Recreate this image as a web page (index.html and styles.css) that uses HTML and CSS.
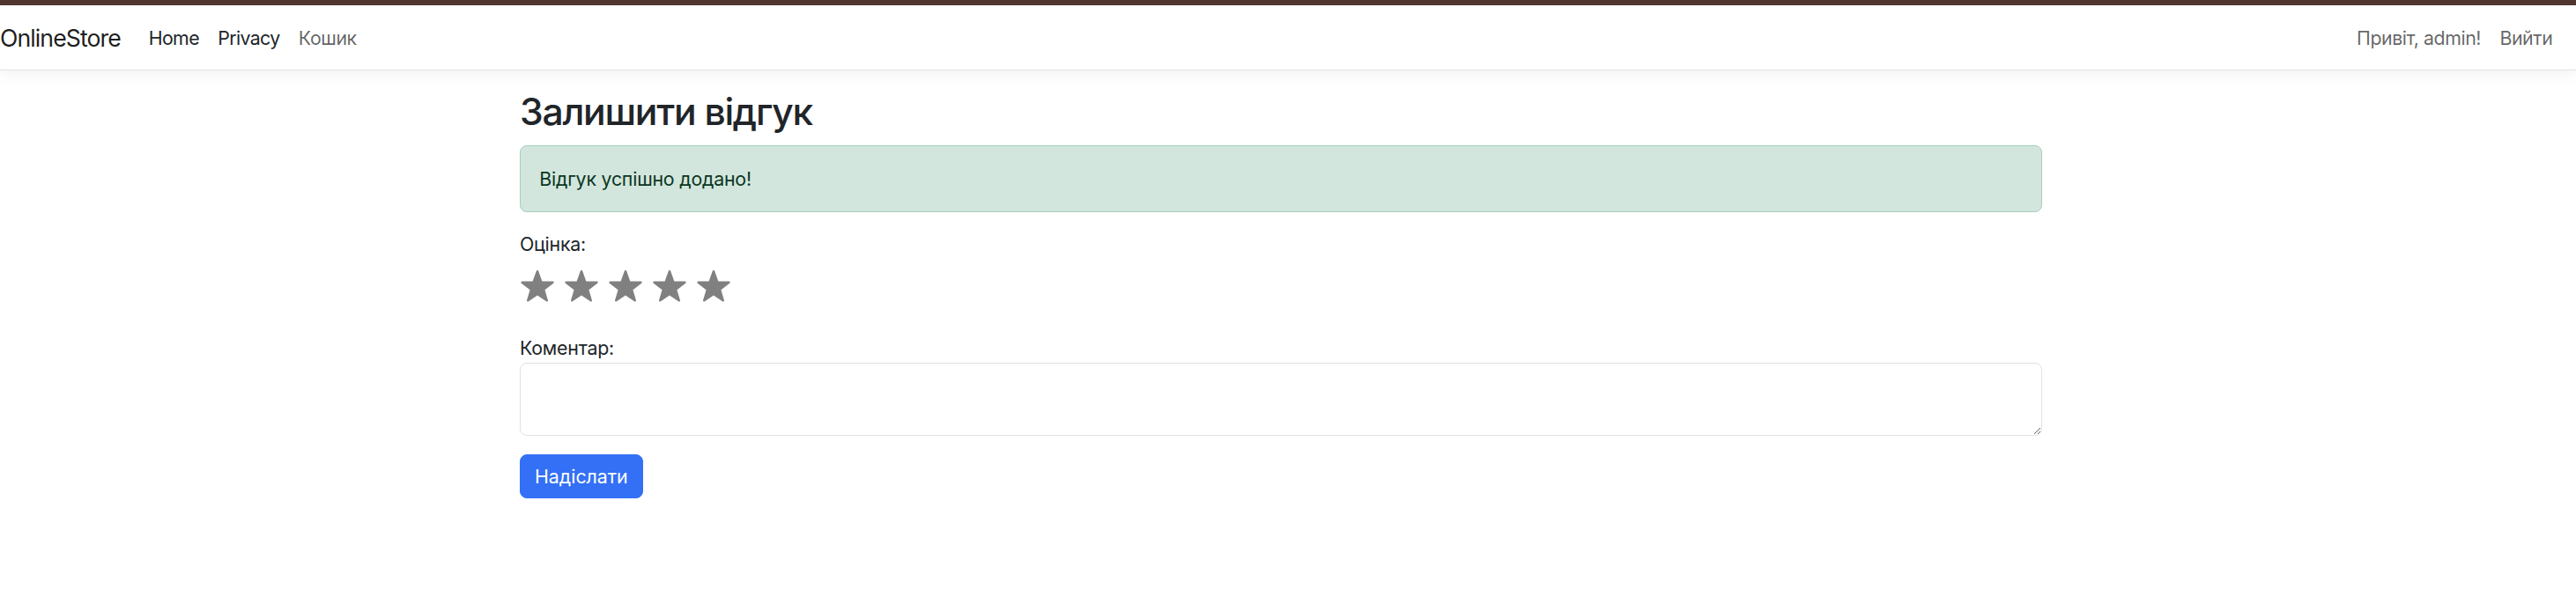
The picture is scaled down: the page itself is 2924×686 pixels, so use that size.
FILE: index.html
```html
<!DOCTYPE html>
<html lang="uk">
<head>
<meta charset="utf-8">
<title>Залишити відгук - OnlineStore</title>
<link rel="stylesheet" href="styles.css">
</head>
<body>
<div class="topbar"></div>
<header class="navbar">
  <nav class="nav-inner">
    <a class="brand" href="#">OnlineStore</a>
    <ul class="nav-list">
      <li><a class="nav-link dark" href="#">Home</a></li>
      <li><a class="nav-link dark" href="#">Privacy</a></li>
      <li><a class="nav-link" href="#">Кошик</a></li>
    </ul>
    <ul class="nav-list nav-right">
      <li><span class="nav-link">Привіт, admin!</span></li>
      <li><a class="nav-link" href="#">Вийти</a></li>
    </ul>
  </nav>
</header>
<main class="page">
  <div class="container">
    <h2 class="title">Залишити відгук</h2>
    <div class="alert">Відгук успішно додано!</div>
    <form class="review-form">
      <div class="field">
        <label class="label">Оцінка:</label>
        <div class="stars">
          <svg class="star" viewBox="0 0 40 38"><polygon points="20,2.2 24.35,14.51 37.4,14.85 27.04,22.79 30.76,35.3 20,27.9 9.24,35.3 12.96,22.79 2.6,14.85 15.65,14.51"/></svg>
          <svg class="star" viewBox="0 0 40 38"><polygon points="20,2.2 24.35,14.51 37.4,14.85 27.04,22.79 30.76,35.3 20,27.9 9.24,35.3 12.96,22.79 2.6,14.85 15.65,14.51"/></svg>
          <svg class="star" viewBox="0 0 40 38"><polygon points="20,2.2 24.35,14.51 37.4,14.85 27.04,22.79 30.76,35.3 20,27.9 9.24,35.3 12.96,22.79 2.6,14.85 15.65,14.51"/></svg>
          <svg class="star" viewBox="0 0 40 38"><polygon points="20,2.2 24.35,14.51 37.4,14.85 27.04,22.79 30.76,35.3 20,27.9 9.24,35.3 12.96,22.79 2.6,14.85 15.65,14.51"/></svg>
          <svg class="star" viewBox="0 0 40 38"><polygon points="20,2.2 24.35,14.51 37.4,14.85 27.04,22.79 30.76,35.3 20,27.9 9.24,35.3 12.96,22.79 2.6,14.85 15.65,14.51"/></svg>
        </div>
      </div>
      <div class="field">
        <label class="label" for="comment">Коментар:</label>
        <textarea id="comment" class="textarea" rows="2"></textarea>
      </div>
      <button type="button" class="btn">Надіслати</button>
    </form>
  </div>
</main>
</body>
</html>
```
FILE: styles.css
```css
* { box-sizing: border-box; }

html, body {
  margin: 0;
  padding: 0;
  background: #fff;
}

body {
  font-family: Inter, "Liberation Sans", Arial, sans-serif;
  font-size: 21.333px;
  line-height: 32px;
  color: #212529;
  letter-spacing: -0.01em;
}

.topbar {
  height: 6px;
  background: #50372f;
}

.navbar {
  background: #fff;
  border-bottom: 1px solid #dee2e6;
  box-shadow: 0 5px 16px rgba(0, 0, 0, 0.05);
}

.nav-inner {
  height: 73px;
  display: flex;
  align-items: center;
  padding: 0 16px 0 0;
}

.brand {
  font-size: 26.667px;
  line-height: 40px;
  letter-spacing: -0.035em;
  color: rgba(0, 0, 0, 0.9);
  text-decoration: none;
  margin-right: 21.333px;
}

.nav-list {
  display: flex;
  list-style: none;
  margin: 0;
  padding: 0;
}

.nav-right {
  margin-left: auto;
}

.nav-link {
  display: block;
  padding: 10.667px;
  color: rgba(0, 0, 0, 0.62);
  text-decoration: none;
  letter-spacing: -0.02em;
}

.nav-link.dark {
  color: #212529;
  letter-spacing: -0.03em;
}

.page {
  margin-right: 16px;
  padding-top: 21.333px;
}

.container {
  width: 1728px;
  margin: 0 auto;
}

.title {
  margin: 0 0 12px;
  font-size: 42.667px;
  font-weight: 500;
  line-height: 1.2;
  letter-spacing: -0.03em;
}

.alert {
  padding: 21.333px;
  margin-bottom: 20px;
  background: #d3e6dd;
  border: 1px solid #a6cfbd;
  border-radius: 8px;
  color: #0a3622;
}

.review-form {
  margin: 0;
}

.field {
  margin-bottom: 21.333px;
}

.label {
  display: block;
}

.stars {
  display: flex;
  gap: 10px;
  height: 64px;
  align-items: center;
}

.star {
  width: 40px;
  height: 38px;
  display: block;
}

.star polygon {
  fill: #808080;
  stroke: #808080;
  stroke-width: 2.5;
  stroke-linejoin: round;
}

.textarea {
  display: block;
  width: 100%;
  height: 83px;
  margin-top: 1px;
  padding: 8px 16px;
  font: inherit;
  color: #212529;
  background: #fff;
  border: 1px solid #dee2e6;
  border-radius: 8px;
  resize: vertical;
}

.btn {
  display: inline-block;
  padding: 8px 16px;
  font: inherit;
  line-height: 32px;
  color: #fff;
  background: #3370f5;
  border: 1px solid #3370f5;
  border-radius: 8px;
}
```
